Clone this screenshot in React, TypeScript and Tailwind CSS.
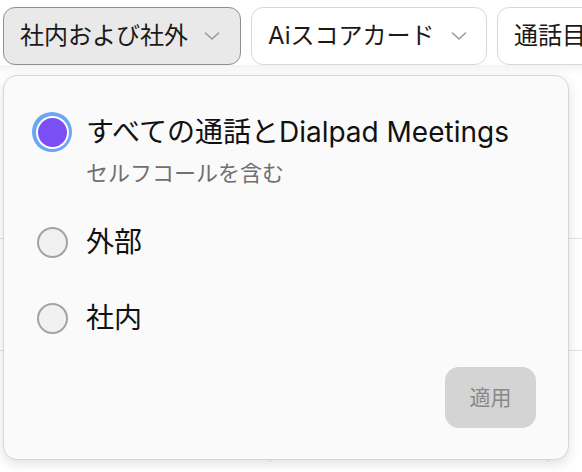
import React from 'react';

const Chevron: React.FC = () => (
  <svg width="16" height="10" viewBox="0 0 16 10" fill="none" className="shrink-0">
    <polyline points="1.5,2 8,8 14.5,2" stroke="#9a9a9a" strokeWidth="1.6" strokeLinecap="round" strokeLinejoin="round" />
  </svg>
);

interface FilterProps {
  label: string;
  active?: boolean;
  width: string;
  chevron?: boolean;
}

const FilterButton: React.FC<FilterProps> = ({ label, active, width, chevron = true }) => (
  <button
    className={
      active
        ? `${width} h-[58px] shrink-0 flex items-center gap-[16px] pl-[16px] pr-[20px] rounded-[12px] border-[1.5px] border-[#8f8f8f] bg-[#e9e9e9] text-[24px] text-[#1a1a1a]`
        : `${width} h-[58px] shrink-0 flex items-center gap-[16px] pl-[16px] pr-[20px] rounded-[12px] border-[1.5px] border-[#d8d8d8] bg-white text-[24px] text-[#1a1a1a]`
    }
  >
    <span className="whitespace-nowrap leading-none">{label}</span>
    {chevron && <Chevron />}
  </button>
);

const Radio: React.FC<{ checked?: boolean }> = ({ checked }) => (
  <div className="w-[40px] h-[40px] shrink-0 flex items-center justify-center">
    {checked ? (
      <div className="w-[40px] h-[40px] rounded-full bg-[#6aa6f8] flex items-center justify-center">
        <div className="w-[33px] h-[33px] rounded-full bg-white flex items-center justify-center">
          <div className="w-[29px] h-[29px] rounded-full bg-[#7a50f4]" />
        </div>
      </div>
    ) : (
      <div className="w-[31px] h-[31px] rounded-full border-2 border-[#a3a3a3] bg-[#f1f1f1]" />
    )}
  </div>
);

export default function App() {
  return (
    <div
      className="relative w-[582px] h-[472px] overflow-hidden bg-white"
      style={{ fontFamily: 'Inter, "Noto Sans CJK JP", sans-serif' }}
    >
      {/* filter bar */}
      <div className="flex gap-[10px] pl-[3px] pt-[7px]">
        <FilterButton label="社内および社外" active width="w-[238px]" />
        <FilterButton label="Aiスコアカード" width="w-[236px]" />
        <FilterButton label="通話目的" width="w-[200px]" chevron={false} />
      </div>
      <div className="h-[10px] bg-gradient-to-b from-[#f3f3f3] to-white" />

      {/* table behind */}
      <div className="grid grid-cols-[271px_278px_1fr] mt-[163px]">
        {Array.from({ length: 6 }).map((_, i) => (
          <div
            key={i}
            className={
              i % 3 === 2
                ? 'h-[112px] border-t border-[#e2e2e2]'
                : 'h-[112px] border-t border-r border-[#e2e2e2]'
            }
          />
        ))}
      </div>

      {/* popover */}
      <div className="absolute left-[3px] top-[75px] w-[566px] h-[385px] rounded-[14px] border border-[#d6d6d6] bg-[#fafafa] shadow-[0_4px_12px_rgba(0,0,0,0.12)] flex flex-col pl-[28px] pr-[32px] pt-[36px]">
        <div className="flex items-start gap-[14px]">
          <Radio checked />
          <div className="flex flex-col">
            <span className="text-[28px] leading-[40px] text-[#111] whitespace-nowrap">
              すべての通話とDialpad Meetings
            </span>
            <span className="mt-[6px] text-[22px] leading-[30px] text-[#707070]">セルフコールを含む</span>
          </div>
        </div>
        <div className="flex items-center gap-[14px] mt-[34px]">
          <Radio />
          <span className="text-[28px] leading-[40px] text-[#111]">外部</span>
        </div>
        <div className="flex items-center gap-[14px] mt-[36px]">
          <Radio />
          <span className="text-[28px] leading-[40px] text-[#111]">社内</span>
        </div>
        <button className="self-end mt-[29px] w-[91px] h-[61px] rounded-[14px] bg-[#d4d4d4] text-[21px] text-[#888]">
          適用
        </button>
      </div>
    </div>
  );
}
